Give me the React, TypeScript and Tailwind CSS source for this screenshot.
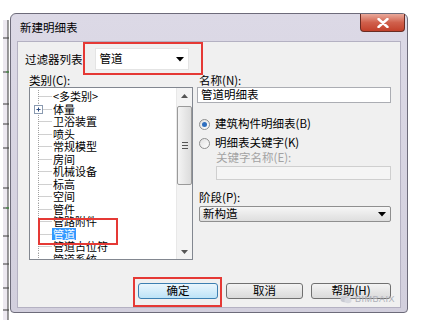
import React from "react";

const FONT = { fontFamily: '"Noto Sans CJK SC", "Noto Sans", sans-serif' };

const rows = [
  "<多类别>",
  "体量",
  "卫浴装置",
  "喷头",
  "常规模型",
  "房间",
  "机械设备",
  "标高",
  "空间",
  "管件",
  "管路附件",
  "管道",
  "管道占位符",
  "管道系统",
];

function TreeGlyph({ plus }: { plus?: boolean }) {
  return (
    <svg width="22" height="12.5" viewBox="0 0 22 12.5" className="shrink-0">
      <line x1="8.5" y1="0" x2="8.5" y2="12.5" stroke="#a0a0a0" strokeWidth="1" strokeDasharray="1 1" />
      <line x1="8.5" y1="6.5" x2="22" y2="6.5" stroke="#a0a0a0" strokeWidth="1" strokeDasharray="1 1" />
      {plus && (
        <g>
          <rect x="4.5" y="2.5" width="8" height="8" fill="#fff" stroke="#8a9ab0" />
          <line x1="6.5" y1="6.5" x2="10.5" y2="6.5" stroke="#2b4a80" />
          <line x1="8.5" y1="4.5" x2="8.5" y2="8.5" stroke="#2b4a80" />
        </g>
      )}
    </svg>
  );
}

function DownArrow() {
  return (
    <svg width="8" height="5" viewBox="0 0 8 5">
      <path d="M0 0 L8 0 L4 4.5 Z" fill="#000" />
    </svg>
  );
}

function Radio({ checked }: { checked?: boolean }) {
  return (
    <div className="w-[11px] h-[11px] rounded-full border border-[#8e8f8f] bg-gradient-to-br from-[#e0e0e0] to-[#ffffff] flex items-center justify-center shrink-0">
      {checked && <div className="w-[5px] h-[5px] rounded-full bg-[#2f6fbf]" />}
    </div>
  );
}

export default function App() {
  return (
    <div className="w-[422px] h-[323px] bg-white flex overflow-hidden" style={FONT}>
      {/* left background strip */}
      <div className="w-[10px] shrink-0 pt-[20px]">
        <svg width="10" height="300" viewBox="0 0 10 300">
          <rect x="3" y="0" width="5" height="300" fill="#ece8f0" />
          <line x1="8" y1="0" x2="8" y2="300" stroke="#3a3a3a" strokeWidth="1" />
          {[18, 52, 84, 104, 128, 168, 188, 216, 244, 268, 290].map((y) => (
            <line key={y} x1="3" y1={y} x2="9" y2={y} stroke="#3a3a3a" strokeWidth="1" />
          ))}
          <line x1="6" y1="52" x2="9" y2="52" stroke="#3c9a3c" />
          <line x1="6" y1="188" x2="9" y2="188" stroke="#3c9a3c" />
        </svg>
      </div>

      {/* dialog */}
      <div className="mt-[13px] w-[398px] h-[300px] shrink-0 border border-[#6d6b7a] rounded-t-[6px] rounded-b-[4px] bg-gradient-to-b from-[#dcd9e6] to-[#d2cfdd] flex flex-col">
        {/* title bar */}
        <div className="h-[27px] flex justify-between">
          <div className="pl-[9px] flex items-center text-[11.5px] text-black">新建明细表</div>
          <div className="mr-[2px] w-[45px] h-[18px] rounded-b-[4px] border border-t-0 border-[#6a2b22] bg-gradient-to-b from-[#e9a99b] via-[#d0604c] to-[#c2402a] flex items-center justify-center">
            <svg width="12" height="10" viewBox="0 0 12 10">
              <path d="M1.5 1 L10.5 9 M10.5 1 L1.5 9" stroke="#fff" strokeWidth="2.4" strokeLinecap="round" />
            </svg>
          </div>
        </div>

        {/* client area */}
        <div className="flex-1 mx-[6px] mb-[4px] border border-[#b4b1c2] bg-[#f0f0f0] relative flex flex-col text-[11.5px] text-black">
          {/* filter row */}
          <div className="mt-[6px] h-[22px] flex items-center pl-[7px]">
            <span className="leading-[22px]">过滤器列表</span>
            <div className="ml-[12px] w-[94px] h-[22px] bg-white border border-[#e4e4e4] flex items-center justify-between pl-[4px] pr-[4px]">
              <span>管道</span>
              <DownArrow />
            </div>
          </div>

          {/* columns */}
          <div className="flex mt-[4px]">
            {/* left column */}
            <div className="ml-[11px] w-[164px] flex flex-col">
              <div className="h-[13px] leading-[13px]">类别(C):</div>
              <div className="h-[173px] border border-[#828790] bg-white flex overflow-hidden">
                <div className="flex-1 pt-[2px] overflow-hidden text-[11px]">
                  {rows.map((r, i) => (
                    <div key={r} className="h-[12.5px] flex items-center">
                      <TreeGlyph plus={i === 1} />
                      <span
                        className={
                          "leading-[12px] whitespace-nowrap px-[1px] " +
                          (r === "管道" ? "bg-[#3399ff] text-white" : "")
                        }
                      >
                        {r}
                      </span>
                    </div>
                  ))}
                </div>
                {/* scrollbar */}
                <div className="w-[16px] bg-[#f3f3f3] border-l border-[#e8e8e8] flex flex-col items-center">
                  <div className="h-[16px] flex items-center justify-center">
                    <svg width="7" height="4" viewBox="0 0 7 4">
                      <path d="M0 4 L7 4 L3.5 0 Z" fill="#555" />
                    </svg>
                  </div>
                  <div className="mt-[2px] w-[15px] h-[79px] rounded-[2px] border border-[#9a9a9a] bg-gradient-to-r from-[#f4f4f4] to-[#dcdcdc] flex items-center justify-center">
                    <div className="flex flex-col gap-[2px]">
                      <div className="w-[6px] h-[1px] bg-[#555]" />
                      <div className="w-[6px] h-[1px] bg-[#555]" />
                      <div className="w-[6px] h-[1px] bg-[#555]" />
                    </div>
                  </div>
                  <div className="flex-1" />
                  <div className="h-[14px] flex items-center justify-center">
                    <svg width="7" height="4" viewBox="0 0 7 4">
                      <path d="M0 0 L7 0 L3.5 4 Z" fill="#555" />
                    </svg>
                  </div>
                </div>
              </div>
            </div>

            {/* right column */}
            <div className="ml-[4px] w-[194px] flex flex-col">
              <div className="h-[13px] leading-[13px] pl-[2px]">名称(N):</div>
              <div className="h-[16px] bg-white border border-[#abadb3] flex items-center pl-[3px]">
                管道明细表
              </div>
              <div className="mt-[14px] h-[14px] flex items-center pl-[2px] gap-[5px]">
                <Radio checked />
                <span>建筑构件明细表(B)</span>
              </div>
              <div className="mt-[5px] h-[14px] flex items-center pl-[2px] gap-[5px]">
                <Radio />
                <span>明细表关键字(K)</span>
              </div>
              <div className="mt-[1px] h-[12px] leading-[12px] pl-[19px] text-[#a3a3a3]">关键字名称(E):</div>
              <div className="mt-[3px] ml-[19px] h-[14px] bg-[#f5f5f5] border border-[#cfcfcf]" />
              <div className="mt-[11px] h-[12px] leading-[12px] pl-[2px]">阶段(P):</div>
              <div className="mt-[3px] ml-[2px] h-[16px] rounded-[2px] border border-[#8f8f8f] bg-gradient-to-b from-[#f6f6f6] to-[#dedede] flex items-center justify-between pl-[3px] pr-[4px]">
                <span>新构造</span>
                <DownArrow />
              </div>
            </div>
          </div>

          {/* buttons */}
          <div className="mt-[23px] flex pl-[120px]">
            <div className="w-[80px] h-[16px] rounded-[3px] border border-[#3c7fb1] bg-gradient-to-b from-[#eaf6fd] to-[#bde3f7] flex items-center justify-center">
              确定
            </div>
            <div className="ml-[8px] w-[77px] h-[16px] rounded-[3px] border border-[#707070] bg-gradient-to-b from-[#f3f3f3] to-[#dadada] flex items-center justify-center">
              取消
            </div>
            <div className="ml-[8px] w-[80px] h-[16px] rounded-[3px] border border-[#707070] bg-gradient-to-b from-[#f3f3f3] to-[#dadada] flex items-center justify-center">
              帮助(H)
            </div>
          </div>

          {/* red highlight boxes */}
          <div className="absolute left-[65px] top-[0px] w-[120px] h-[33px] border-2 border-[#e53935]" />
          <div className="absolute left-[20px] top-[176px] w-[80px] h-[27px] border-2 border-[#e53935]" />
          <div className="absolute left-[115px] top-[235px] w-[89px] h-[30px] border-2 border-[#e53935]" />

          {/* watermark */}
          <div className="absolute left-[322px] top-[252px] flex items-center gap-[3px] text-[9px] leading-[10px] text-[#aeb0ba] tracking-[0.5px]">
            <svg width="12" height="9" viewBox="0 0 12 9">
              <ellipse cx="4.5" cy="4" rx="4" ry="3.3" fill="#c8cad2" />
              <ellipse cx="8" cy="5.5" rx="3.5" ry="2.8" fill="#d8dae0" />
            </svg>
            <span style={{ fontFamily: '"Liberation Sans", sans-serif' }}>BIMBAIX</span>
          </div>
        </div>
      </div>
    </div>
  );
}
